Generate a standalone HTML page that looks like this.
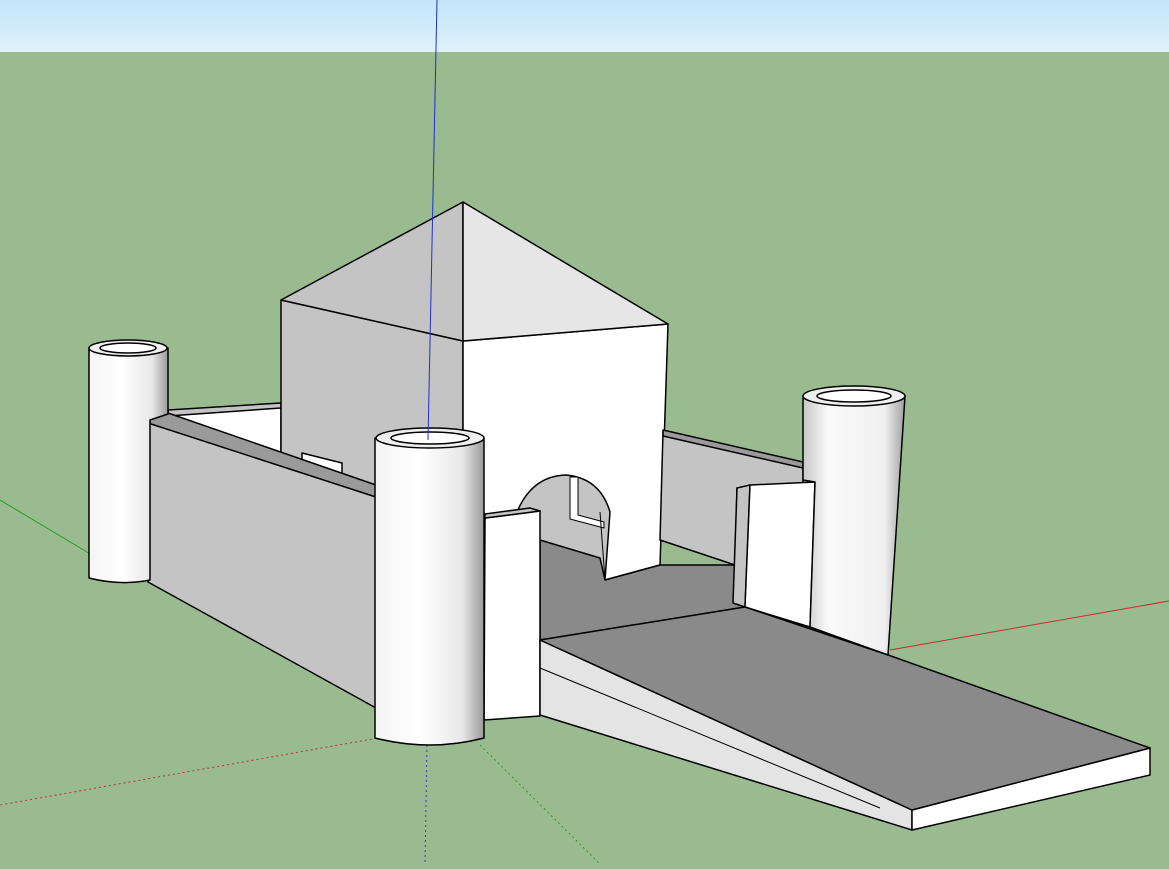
<!DOCTYPE html>
<html><head><style>html,body{margin:0;padding:0;overflow:hidden;background:#99bb8f}</style></head><body>
<svg width="1169" height="864" viewBox="0 0 1169 864" xmlns="http://www.w3.org/2000/svg">
<defs>
<linearGradient id="sky" x1="0" y1="0" x2="0" y2="1"><stop offset="0" stop-color="#c3e5fb"/><stop offset="1" stop-color="#e0f1fb"/></linearGradient>
<linearGradient id="cyl" x1="0" y1="0" x2="1" y2="0"><stop offset="0" stop-color="#f4f4f4"/><stop offset="0.4" stop-color="#ffffff"/><stop offset="0.8" stop-color="#e8e8e8"/><stop offset="1" stop-color="#9a9a9a"/></linearGradient>
<linearGradient id="cyl2" x1="0" y1="0" x2="1" y2="0"><stop offset="0" stop-color="#c8c8c8"/><stop offset="0.25" stop-color="#fafafa"/><stop offset="0.8" stop-color="#f0f0f0"/><stop offset="1" stop-color="#a0a0a0"/></linearGradient>
</defs>
<rect x="0" y="0" width="1169" height="52" fill="url(#sky)"/>
<rect x="0" y="52" width="1169" height="812" fill="#99bb8f"/>
<g stroke-width="1">
<line x1="0" y1="500" x2="92" y2="555" stroke="#2a9a2a"/>
<line x1="480" y1="745" x2="600" y2="864" stroke="#2a9a2a" stroke-dasharray="2,3"/>
<line x1="480" y1="720" x2="0" y2="805" stroke="#c03030" stroke-dasharray="2,3"/>
<line x1="890" y1="650" x2="1169" y2="601" stroke="#c03030"/>
<line x1="427" y1="745" x2="425" y2="864" stroke="#3040c0" stroke-dasharray="2,3"/>
</g>
<g stroke="#000" stroke-width="1.5" stroke-linejoin="round">
<polygon points="168,413 281,404 281,460 372,492 148,423" fill="#ffffff"/>
<polygon points="168,410 281,403 281,408 168,416" fill="#c4c4c4"/>
<polygon points="281,300 463,341 463,520 281,470" fill="#c4c4c4"/>
<polygon points="463,341 668,324 660,565 605,580 463,540" fill="#ffffff"/>
<polygon points="281,300 463,202 463,341" fill="#c4c4c4"/>
<polygon points="463,202 668,324 463,341" fill="#e6e6e6"/>
<path d="M517,512 Q532,476 566,475 Q600,478 610,512 L605,580 L540,560 L517,560 Z" fill="#c4c4c4"/>
<polygon points="570,477 578,477 578,515 604,522 604,528 570,519" fill="#ffffff" stroke-width="1"/>
<line x1="600" y1="512" x2="605" y2="580" stroke-width="1"/>
<polygon points="302,453 342,463 342,482 302,473" fill="#ffffff"/>
<polygon points="663,432 803,466 803,486 737,488 735,565 660,540" fill="#c4c4c4"/>
<polygon points="663,430 803,462 803,468 663,436" fill="#9a9a9a"/>
<polygon points="540,540 600,558 605,580 660,565 735,565 745,607 540,640" fill="#8a8a8a"/>
<polygon points="148,422 376,497 376,708 148,582" fill="#c4c4c4"/>
<polygon points="148,418 168,413 376,485 376,497 148,423" fill="#9a9a9a"/>
<path d="M89,348 L89,578 Q120,586 150,580 L150,420 L168,414 L168,348 Z" fill="url(#cyl)"/>
<ellipse cx="128" cy="348" rx="39" ry="8" fill="#eeeeee"/>
<ellipse cx="128" cy="348" rx="28" ry="5" fill="#ffffff"/>
<polygon points="485,518 540,511 540,716 484,720" fill="#ffffff"/>
<polygon points="485,514 530,508 540,511 485,518" fill="#c4c4c4"/>
<polygon points="737,488 750,485 745,607 733,603" fill="#c4c4c4"/>
<polygon points="750,485 815,482 810,627 745,607" fill="#ffffff"/>
<path d="M803,396 L803,480 L815,482 L810,627 L888,655 L905,396 Z" fill="url(#cyl2)"/>
<ellipse cx="854" cy="396" rx="51" ry="10" fill="#eeeeee"/>
<ellipse cx="854" cy="396" rx="37" ry="6" fill="#ffffff"/>
<polygon points="540,640 912,810 912,830 540,715" fill="#e4e4e4"/>
<line x1="540" y1="668" x2="880" y2="808" stroke-width="1"/>
<polygon points="912,810 1150,748 1150,775 912,830" fill="#ffffff"/>
<polygon points="540,640 745,607 888,655 1150,748 912,810" fill="#8a8a8a"/>
<path d="M375,438 L375,738 Q430,752 484,738 L484,438 Z" fill="url(#cyl)"/>
<ellipse cx="430" cy="438" rx="54" ry="10" fill="#eeeeee"/>
<ellipse cx="430" cy="438" rx="39" ry="6" fill="#ffffff"/>
</g>
<line x1="437" y1="0" x2="428" y2="440" stroke="#2030d0" stroke-width="1"/>
</svg>
</body></html>
